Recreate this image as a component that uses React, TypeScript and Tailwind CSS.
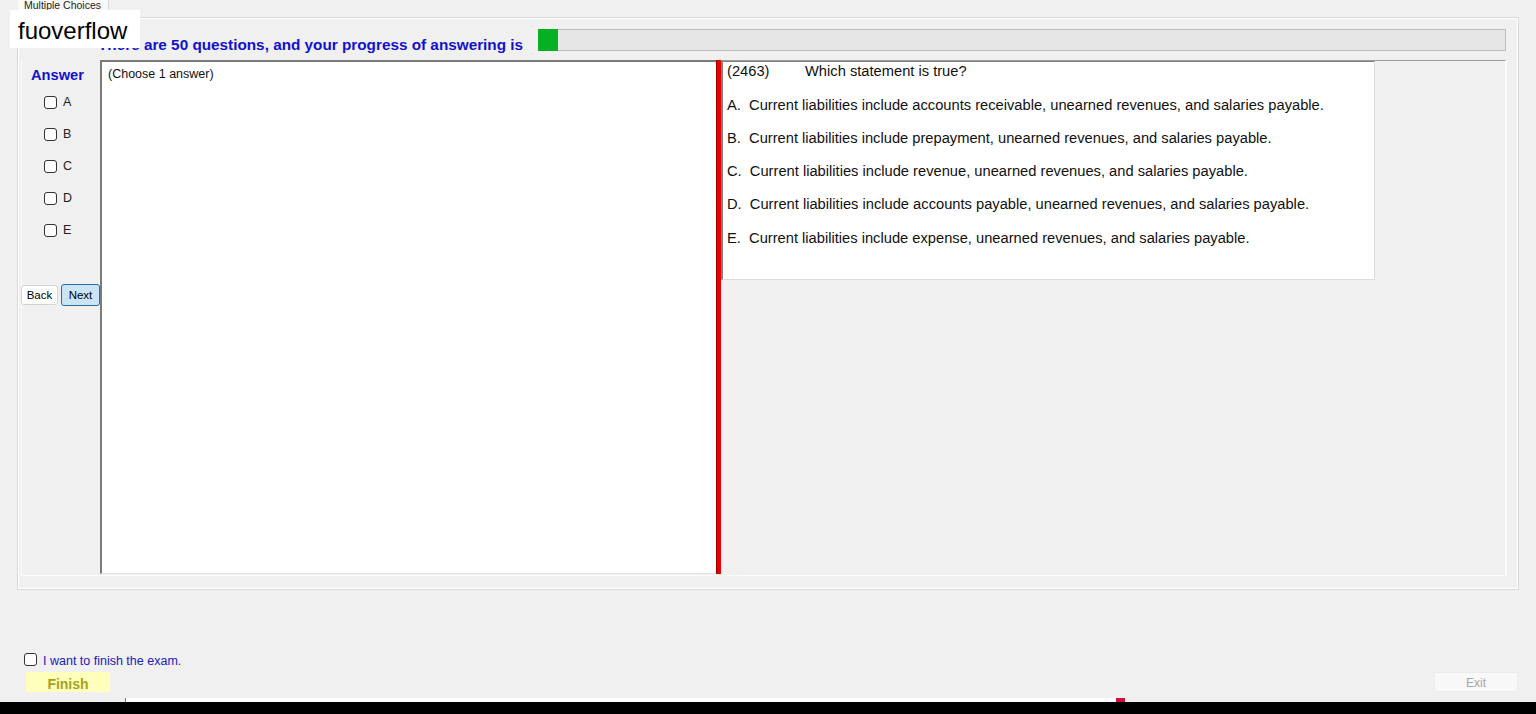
import React from "react";

const letters = ["A", "B", "C", "D", "E"];

const options = [
  "A.  Current liabilities include accounts receivable, unearned revenues, and salaries payable.",
  "B.  Current liabilities include prepayment, unearned revenues, and salaries payable.",
  "C.  Current liabilities include revenue, unearned revenues, and salaries payable.",
  "D.  Current liabilities include accounts payable, unearned revenues, and salaries payable.",
  "E.  Current liabilities include expense, unearned revenues, and salaries payable.",
];

function Box() {
  return <div className="h-[13px] w-[13px] shrink-0 rounded-[3px] border border-[#333333] bg-white" />;
}

export default function App() {
  return (
    <div className="relative flex h-[714px] w-[1536px] flex-col overflow-hidden bg-[#f0f0f0] font-['Liberation_Sans',Arial,sans-serif] text-black">
      {/* tab strip */}
      <div className="flex h-[17px] pl-[18px]">
        <div className="h-[17px] w-[91px] border-r border-[#d9d9d9] bg-[#f9f9f9] pl-[6px] text-[10.5px] leading-[10px] text-[#222]">
          Multiple Choices
        </div>
      </div>

      {/* tab page */}
      <div className="ml-[17px] flex h-[573px] w-[1502px] flex-col border border-[#d9d9d9] shadow-[inset_1px_1px_0_#ffffff,inset_-1px_-1px_0_#ffffff]">
        <div className="mt-[11px] flex h-[22px]">
          <div className="w-[520px] whitespace-nowrap pl-[80px] pt-[7px] text-[15.3px] font-bold leading-[17px] text-[#1212cc]">
            There are 50 questions, and your progress of answering is
          </div>
          <div className="flex h-[22px] w-[968px]">
            <div className="w-[20px] bg-[#06b025]" />
            <div className="flex-1 border border-l-0 border-[#bcbcbc] bg-[#e6e6e6]" />
          </div>
        </div>

        <div className="ml-[3px] mt-[9px] flex h-[516px] w-[1486px] border-x border-b border-[#fbfbfb]">
          {/* answer column */}
          <div className="flex w-[78px] flex-col">
            <div className="pl-[9px] pt-[7px] text-[14.67px] font-bold leading-[17px] text-[#1212cc]">Answer</div>
            <div className="mt-[12px] flex flex-col">
              {letters.map((l) => (
                <div key={l} className="flex h-[32px] items-start pl-[22px]">
                  <Box />
                  <span className="ml-[6px] text-[12.5px] leading-[13px] text-[#222]">{l}</span>
                </div>
              ))}
            </div>
            <div className="-ml-px mt-[28px] flex items-center">
              <button className="h-[20px] w-[37px] rounded-[3px] border border-[#d4d4d4] bg-white text-[11.5px] leading-[18px] text-black">
                Back
              </button>
              <button className="ml-[3px] h-[22px] w-[39px] rounded-[3px] border border-[#2a6f9e] bg-[#cce4f7] text-[11.5px] leading-[20px] text-black">
                Next
              </button>
            </div>
          </div>

          {/* left text panel */}
          <div className="h-[514px] w-[616px] border-b border-l-2 border-t-2 border-[#7a7a7a] border-b-[#e3e3e3] bg-white pl-[6px] pt-[5px] text-[12.5px] leading-[15px] text-[#111]">
            (Choose 1 answer)
          </div>

          {/* splitter */}
          <div className="h-[514px] w-[5px] border-l border-[#a00000] bg-[#e60000]" />

          {/* question panel */}
          <div className="flex h-[514px] flex-1 flex-col border-r border-t border-[#9c9c9c] border-r-white">
            <div className="h-[219px] w-[654px] border-b border-l-2 border-r border-t border-[#808080] border-b-[#dcdcdc] border-r-[#dcdcdc] bg-white pl-[4px] pt-[1px] text-[14.7px] text-[#111]">
              <div className="whitespace-pre leading-[17px]">
                <span className="inline-block w-[78px]">(2463)</span>Which statement is true?
              </div>
              <div className="mt-[9px]">
                {options.map((o, i) => (
                  <div key={o} className={`whitespace-pre leading-[33px] ${i === 4 ? "mt-[1px]" : ""}`}>
                    {o}
                  </div>
                ))}
              </div>
            </div>
          </div>
        </div>
      </div>

      {/* finish area */}
      <div className="ml-[24px] mt-[63px] flex h-[13px] items-start">
        <Box />
        <span className="ml-[6px] pt-[2px] text-[12.5px] leading-[13px] text-[#2020b8]">I want to finish the exam.</span>
      </div>
      <div className="mt-[6px] flex h-[20px] items-center justify-between pl-[26px] pr-[18px]">
        <button className="h-[20px] w-[84px] bg-[#ffffbc] pt-[2px] text-[14px] font-bold leading-[20px] text-[#a3a31c]">
          Finish
        </button>
        <button className="h-[20px] w-[84px] rounded-[3px] border border-[#ececec] bg-[#f8f8f8] pt-px text-[12px] leading-[18px] text-[#a6a6a6]">
          Exit
        </button>
      </div>

      {/* bottom strip */}
      <div className="mt-[6px] flex h-[4px]">
        <div className="w-[126px] border-r border-[#777]" />
        <div className="w-[990px] bg-white" />
        <div className="w-[9px] bg-[#c8143c]" />
      </div>
      <div className="h-[12px] bg-black" />

      {/* watermark overlay */}
      <div className="absolute left-[10px] top-[10px] h-[38px] w-[130px] bg-white pl-[8px] pt-[7px] text-[24px] leading-[28px] text-black">
        fuoverflow
      </div>
    </div>
  );
}
